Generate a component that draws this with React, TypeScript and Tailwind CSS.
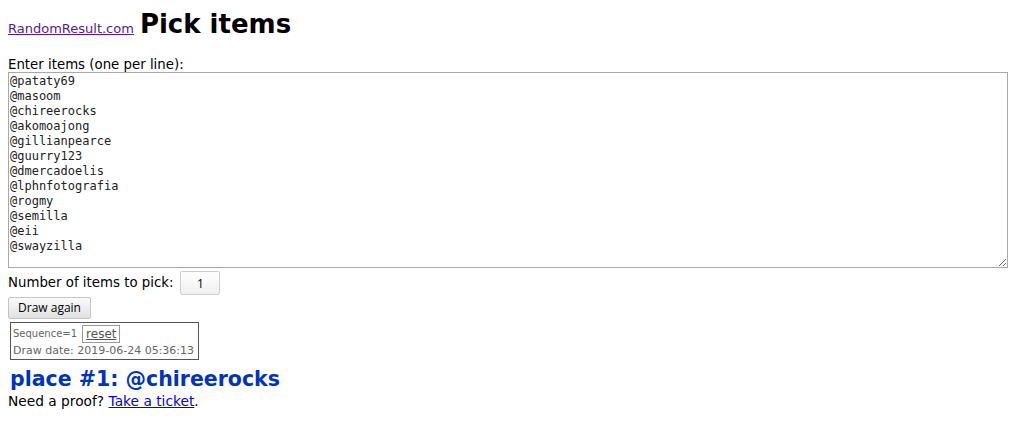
const ITEMS = [
  '@pataty69',
  '@masoom',
  '@chireerocks',
  '@akomoajong',
  '@gillianpearce',
  '@guurry123',
  '@dmercadoelis',
  '@lphnfotografia',
  '@rogmy',
  '@semilla',
  '@eii',
  '@swayzilla',
];

export default function App() {
  return (
    <div className="min-h-screen bg-white px-2 pt-[8px] text-[13.33px] text-black font-['DejaVu_Sans',sans-serif]">
      {/* header */}
      <div className="flex items-baseline gap-[6px]">
        <a href="#" className="text-[13px] text-[#551a8b] underline">
          RandomResult.com
        </a>
        <h1 className="text-[26px] font-bold leading-[32px]">Pick items</h1>
      </div>

      <div className="mt-[17px] leading-[15px]">Enter items (one per line):</div>
      <textarea
        readOnly
        defaultValue={ITEMS.join('\n')}
        className="block h-[196px] w-[1000px] resize border border-[#a9a9a9] px-[1px] py-[1px] font-['DejaVu_Sans_Mono',monospace] text-[12px] leading-[15px] text-[#222] outline-none"
      />

      <div className="mt-[3px] flex items-center gap-[7px]">
        <span>Number of items to pick:</span>
        <input
          readOnly
          value="1"
          className="h-[24px] w-[40px] rounded-[2px] border border-[#cfcfcf] bg-gradient-to-b from-white to-[#f0f0f0] text-center font-['Open_Sans',sans-serif] text-[12px] outline-none"
        />
      </div>

      <button className="mt-[2px] block h-[22px] w-[83px] rounded-[2px] border border-[#c4c4c4] bg-gradient-to-b from-[#fafafa] to-[#e2e2e2] font-['Open_Sans',sans-serif] text-[12px] text-black">
        Draw again
      </button>

      <div className="ml-[2px] mt-[3px] inline-block h-[38px] w-[189px] border border-[#555] px-[2px] pt-[2px] text-[11px] leading-[16px] text-[#666]">
        <div className="flex items-center gap-[5px]">
          <span className="text-[10px]">Sequence=1</span>
          <span className="border border-[#999] px-[3px] text-[12px] leading-[16px] text-[#555] underline">reset</span>
        </div>
        <div className="leading-[15px]">Draw date: 2019-06-24 05:36:13</div>
      </div>

      <div className="ml-[2px] mt-[7px] text-[20.5px] font-bold leading-[24px] text-[#0033bb]">
        place #1: @chireerocks
      </div>
      <div className="mt-[2px] text-[13.75px] leading-[16px]">
        Need a proof?{' '}
        <a href="#" className="text-[#0000ee] underline">
          Take a ticket
        </a>
        .
      </div>
    </div>
  );
}
